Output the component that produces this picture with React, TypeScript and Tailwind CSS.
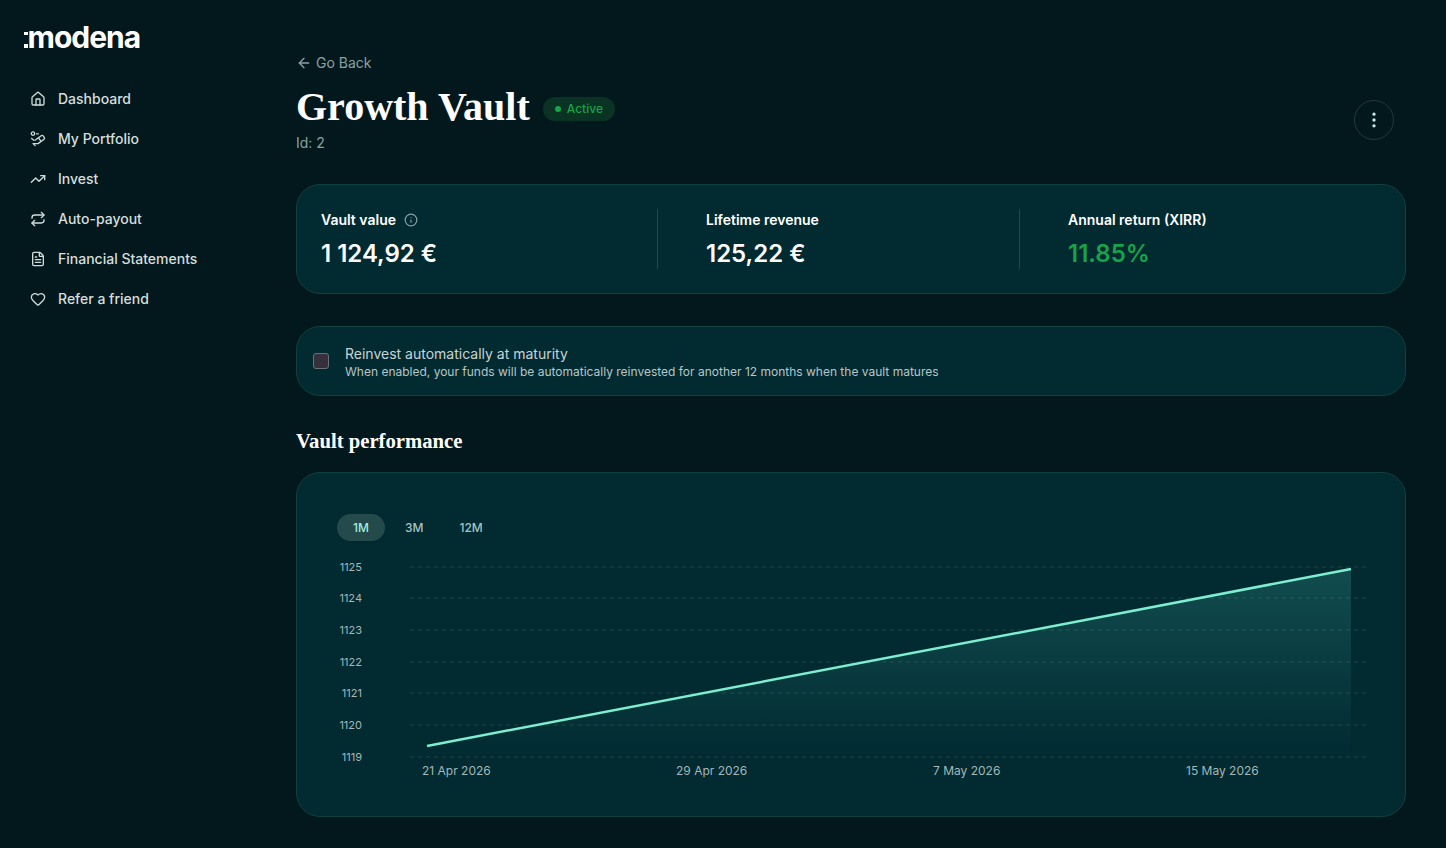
import { ArrowLeft, EllipsisVertical, FileText, Heart, House, Info, Repeat, TrendingUp } from 'lucide-react';

function PortfolioIcon({ className }: { className?: string }) {
  return (
    <svg viewBox="0 0 16 16" fill="none" stroke="currentColor" strokeWidth="1.3" strokeLinecap="round" strokeLinejoin="round" className={className}>
      <circle cx="3" cy="2.6" r="1.7" />
      <path d="M6.5 2.8h1.8" />
      <path d="M5 9.2l6.2-4.4a1.6 1.6 0 0 1 2.2.3l.8 1.2a1.6 1.6 0 0 1-.4 2.2L8 12.6H3.2" />
      <path d="M8.5 6.8l2 2.8" />
      <path d="M1.6 7.4l2.2 1.8M3.2 12.6l2 2" />
    </svg>
  );
}

const navItems = [
  { label: 'Dashboard', icon: House },
  { label: 'My Portfolio', icon: PortfolioIcon },
  { label: 'Invest', icon: TrendingUp },
  { label: 'Auto-payout', icon: Repeat },
  { label: 'Financial Statements', icon: FileText },
  { label: 'Refer a friend', icon: Heart },
];

const yTicks = [
  { label: '1125', y: 12 },
  { label: '1124', y: 43 },
  { label: '1123', y: 75 },
  { label: '1122', y: 107 },
  { label: '1121', y: 138 },
  { label: '1120', y: 170 },
  { label: '1119', y: 202 },
];

const xTicks = [
  { label: '21 Apr 2026', x: 85 },
  { label: '29 Apr 2026', x: 339 },
  { label: '7 May 2026', x: 596 },
  { label: '15 May 2026', x: 849 },
];

function Chart() {
  return (
    <svg viewBox="0 0 1029 226" className="mt-[14px] block h-[226px] w-[1029px]">
      <defs>
        <linearGradient id="area" x1="0" y1="0" x2="0" y2="1">
          <stop offset="0%" stopColor="#5eead4" stopOpacity="0.18" />
          <stop offset="100%" stopColor="#5eead4" stopOpacity="0" />
        </linearGradient>
      </defs>
      {yTicks.map((t) => (
        <g key={t.label}>
          <line x1="73" x2="1029" y1={t.y} y2={t.y} stroke="#1f4547" strokeDasharray="4 4" />
          <text x="25" y={t.y + 4} textAnchor="end" fontSize="11" fill="#a3b8b8" fontFamily="Inter, sans-serif">
            {t.label}
          </text>
        </g>
      ))}
      <path d="M90 191L1014 14V202H90Z" fill="url(#area)" />
      <path d="M90 191L1014 14" stroke="#7eeed0" strokeWidth="2.5" fill="none" />
      {xTicks.map((t) => (
        <text key={t.label} x={t.x} y="220" fontSize="12" fill="#a3b8b8" fontFamily="Inter, sans-serif">
          {t.label}
        </text>
      ))}
    </svg>
  );
}

export default function App() {
  return (
    <div className="flex h-[848px] w-[1446px] overflow-hidden bg-[#03181c] font-['Inter',sans-serif] text-white">
      <aside className="w-[296px] shrink-0 pt-[19px]">
        <div className="flex items-center pl-6">
          <span className="mt-[5px] flex h-[16px] w-[3.5px] flex-col justify-between">
            <span className="h-[3.5px] w-[3.5px] bg-white" />
            <span className="h-[3.5px] w-[3.5px] bg-white" />
          </span>
          <span className="text-[30px] leading-9 font-bold tracking-[-1px]">modena</span>
        </div>
        <nav className="mt-6 flex flex-col pl-[30px]">
          {navItems.map((item) => {
            const Icon = item.icon;
            return (
              <a key={item.label} className="flex h-10 items-center gap-3 text-sm font-medium text-[#d5dedd]">
                <Icon className="h-4 w-4 text-[#cfdcdb]" />
                {item.label}
              </a>
            );
          })}
        </nav>
      </aside>

      <main className="w-[1110px] shrink-0 pt-[53px]">
        <div className="flex items-center gap-1 text-sm leading-5 text-[#8aa2a2]">
          <ArrowLeft className="h-4 w-4" />
          Go Back
        </div>
        <div className="relative">
          <div className="mt-2.5 flex items-center gap-[13px]">
            <h1 className="font-['Liberation_Serif',serif] text-[40px] leading-[48px] font-bold">Growth Vault</h1>
            <span className="mt-1 flex h-6 items-center gap-1.5 rounded-full bg-[#0a3324] px-3 text-xs font-medium text-[#16a34a]">
              <span className="h-1.5 w-1.5 rounded-full bg-[#16a34a]" />
              Active
            </span>
          </div>
          <button className="absolute top-[17px] right-3 flex h-10 w-10 items-center justify-center rounded-full border border-[#1d3a3d] text-[#c6e8e4]">
            <EllipsisVertical className="h-5 w-5" />
          </button>
        </div>
        <p className="mt-0.5 text-sm leading-5 text-[#8aa2a2]">Id: 2</p>

        <section className="mt-[31px] flex h-[110px] items-center rounded-3xl border border-[#12403f] bg-[#012a31] px-6">
          <div className="h-[60px] w-[337px] border-r border-[#1d4a4c] pt-px">
            <div className="flex items-center gap-2 text-sm leading-5 font-semibold">
              Vault value
              <Info className="h-[14px] w-[14px] text-[#8aa2a2]" />
            </div>
            <div className="mt-2 text-2xl leading-8 font-semibold">1 124,92 €</div>
          </div>
          <div className="h-[60px] w-[362px] border-r border-[#1d4a4c] pt-px pl-12">
            <div className="text-sm leading-5 font-semibold">Lifetime revenue</div>
            <div className="mt-2 text-2xl leading-8 font-semibold">125,22 €</div>
          </div>
          <div className="h-[60px] pt-px pl-12">
            <div className="text-sm leading-5 font-semibold">Annual return (XIRR)</div>
            <div className="mt-2 text-2xl leading-8 font-semibold text-[#16a34a]">11.85%</div>
          </div>
        </section>

        <section className="mt-8 flex h-[70px] items-center gap-4 rounded-3xl border border-[#12403f] bg-[#012a31] px-4">
          <span className="h-4 w-4 rounded-[3px] border border-[#6d6f76] bg-[#35303c]" />
          <div className="pt-0.5">
            <div className="text-sm leading-5 text-[#c8d4d4]">Reinvest automatically at maturity</div>
            <div className="text-xs leading-4 text-[#b7c6c6]">
              When enabled, your funds will be automatically reinvested for another 12 months when the vault matures
            </div>
          </div>
        </section>

        <h2 className="mt-[33px] font-['Liberation_Serif',serif] text-[20.7px] leading-6 font-bold">Vault performance</h2>

        <section className="mt-[19px] h-[345px] rounded-3xl border border-[#12403f] bg-[#012a31] pt-[41px] pl-10">
          <div className="flex items-center text-xs font-medium text-[#a3c4c2]">
            <span className="flex h-[27px] w-12 items-center justify-center rounded-full bg-[#244a4c] text-[#9ff0dc]">1M</span>
            <span className="ml-5">3M</span>
            <span className="ml-9">12M</span>
          </div>
          <Chart />
        </section>
      </main>
    </div>
  );
}
